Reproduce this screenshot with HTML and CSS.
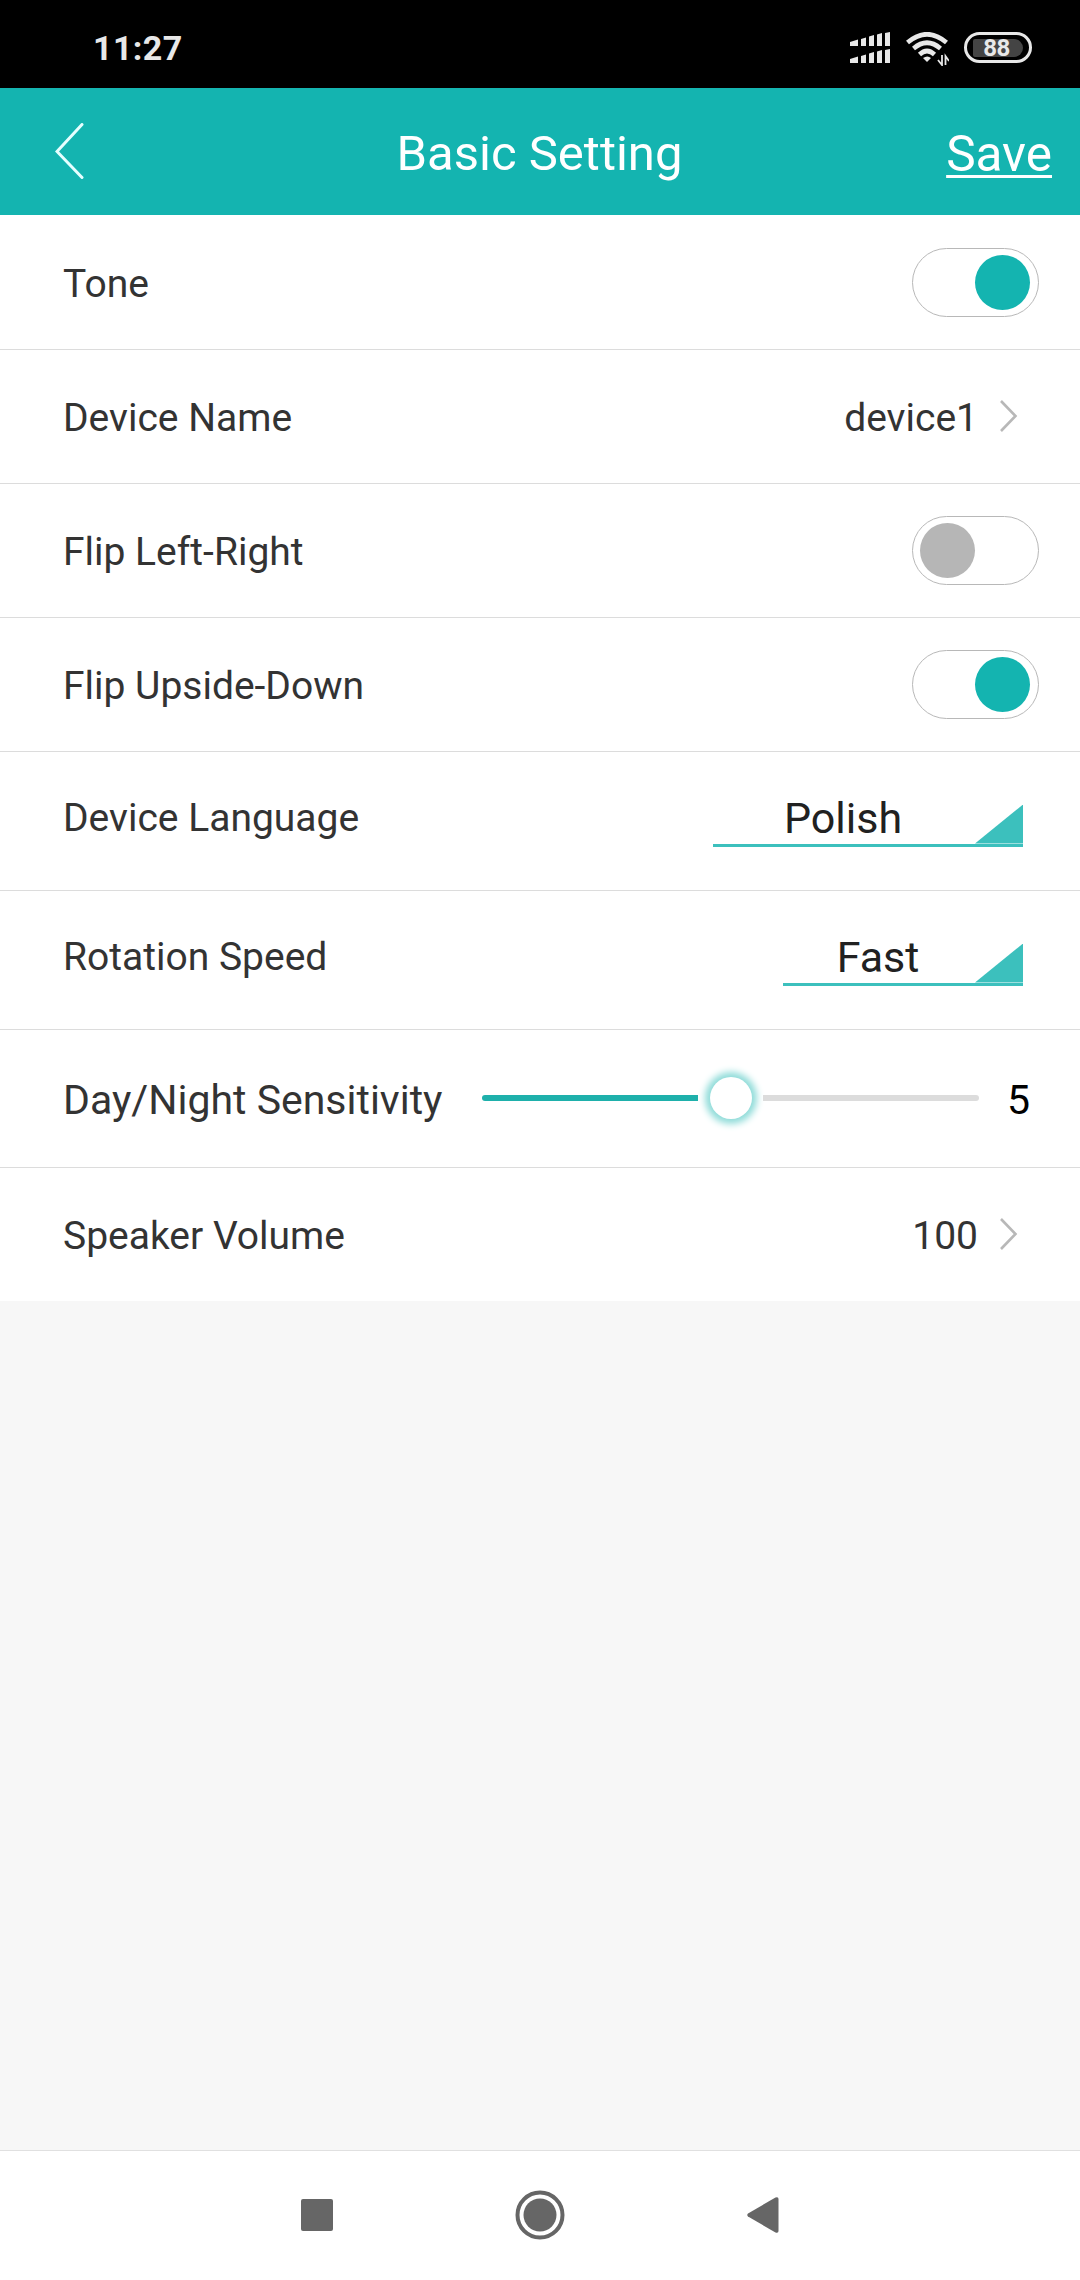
FILE: index.html
```html
<!DOCTYPE html>
<html lang="en">
<head>
    <meta charset="UTF-8">
    <meta name="viewport" content="width=device-width, initial-scale=1.0">
    <title>Basic Setting</title>
    <link rel="stylesheet" href="styles.css">
</head>
<body>
    <div class="status-bar">
        <span class="time">11:27</span>
        <div class="status-icons">
            <svg class="signal" width="40" height="32" viewBox="0 0 40 32" fill="#e8e8e8">
                <path id="bars" d="M0 10l8-2.500v6.500H0zM11 7l5-1.500V14h-5zM19 4.500l5-1.500V14h-5zM27 2.500l5-1.500V14h-5zM35 1l5-1v14h-5z"/>
                <use href="#bars" y="17"/>
            </svg>
            <svg class="wifi" width="43" height="34" viewBox="0 0 43 34" fill="none" stroke="#e8e8e8" stroke-width="4.600">
                <path d="M1.500 10.500Q21 -6 40.500 10.500"/>
                <path d="M7.500 16.500Q21 5 34.500 16.500"/>
                <path d="M13.500 22.500Q21 15.500 28.500 22.500"/>
                <path d="M17 26q4.500-3 8 0l-4 4z" fill="#e8e8e8" stroke="none"/>
                <path d="M36 23v10l-4-5M39.500 33V24l3.500 5" stroke-width="1.800"/>
            </svg>
            <div class="battery"><span>88</span></div>
        </div>
    </div>

    <header>
        <button class="back" aria-label="Back">
            <svg width="30" height="58" viewBox="0 0 30 58" fill="none" stroke="#e6ffff" stroke-width="3" stroke-linecap="round">
                <path d="M27 1.500L2 28.500L27 54.500"/>
            </svg>
        </button>
        <h1>Basic Setting</h1>
        <a class="save" href="#">Save</a>
    </header>

    <main>
        <div class="row row-first">
            <span class="label">Tone</span>
            <span class="switch on"></span>
        </div>
        <div class="row">
            <span class="label">Device Name</span>
            <span class="value value-name">device1</span>
            <svg class="chevron" width="19" height="34" viewBox="0 0 19 34"><path d="M2 1l14.500 15L2 31"/></svg>
        </div>
        <div class="row">
            <span class="label">Flip Left-Right</span>
            <span class="switch"></span>
        </div>
        <div class="row">
            <span class="label">Flip Upside-Down</span>
            <span class="switch on"></span>
        </div>
        <div class="row row-select">
            <span class="label">Device Language</span>
            <div class="select language"><span>Polish</span></div>
        </div>
        <div class="row row-select">
            <span class="label">Rotation Speed</span>
            <div class="select speed"><span>Fast</span></div>
        </div>
        <div class="row row-slider">
            <span class="label">Day/Night Sensitivity</span>
            <div class="slider">
                <span class="track filled"></span>
                <span class="thumb"></span>
                <span class="track"></span>
            </div>
            <span class="level">5</span>
        </div>
        <div class="row row-last">
            <span class="label">Speaker Volume</span>
            <span class="value">100</span>
            <svg class="chevron" width="19" height="34" viewBox="0 0 19 34"><path d="M2 1l14.500 15L2 31"/></svg>
        </div>
    </main>

    <nav>
        <svg width="32" height="32" viewBox="0 0 32 32"><rect width="32" height="32" rx="2"/></svg>
        <svg width="50" height="50" viewBox="0 0 50 50">
            <circle cx="25" cy="25" r="22.500" fill="none" stroke="#666" stroke-width="4"/>
            <circle cx="25" cy="25" r="16.500"/>
        </svg>
        <svg width="32" height="36" viewBox="0 0 32 36"><path d="M1 16.500L28.500 .5Q31.500-.5 31.500 2v32q0 2.500-3 1.500L1 19.500q-1.500-1.500 0-3z"/></svg>
    </nav>
</body>
</html>
```

FILE: styles.css
```css
:root {
    --primary-color: #14b4b0;
    --select-color: #3cc0bd;
    --text-color: #333;
    --border-color: #dcdcdc;
    --background-color: #f7f7f7;
}

* {
    margin: 0;
    padding: 0;
    box-sizing: border-box;
}

body {
    display: flex;
    flex-direction: column;
    height: 2280px;
    font-family: Roboto, "Liberation Sans", sans-serif;
    background-color: var(--background-color);
    color: var(--text-color);
}

svg {
    display: block;
}

.status-bar {
    display: flex;
    justify-content: space-between;
    align-items: center;
    height: 88px;
    padding: 7px 48px 0 93px;
    background-color: #000;
    color: #e8e8e8;
}

.time {
    font-size: 34px;
    font-weight: bold;
    letter-spacing: 0.4px;
}

.status-icons {
    display: flex;
    align-items: center;
}

.wifi {
    margin: 2px 15px 0 16px;
}

.battery {
    display: flex;
    justify-content: center;
    align-items: center;
    width: 68px;
    height: 31px;
    border: 3px solid #e8e8e8;
    border-radius: 16px;
}

.battery span {
    width: 50px;
    height: 18px;
    border-radius: 2px 9px 9px 2px;
    background-color: #444;
    font-size: 24px;
    font-weight: bold;
    line-height: 19px;
    text-align: center;
    padding-right: 3px;
    letter-spacing: -0.6px;
}

header {
    display: grid;
    grid-template-columns: 200px 1fr 200px;
    align-items: center;
    height: 127px;
    padding: 0 28px 0 55px;
    background-color: var(--primary-color);
    color: #fff;
}

.back {
    width: 30px;
    border: none;
    background: none;
}

h1 {
    padding-right: 28px;
    font-size: 49px;
    font-weight: normal;
    text-align: center;
    padding-top: 4px;
}

.save {
    padding-top: 4px;
    font-size: 49.5px;
    color: #fff;
    text-align: right;
    text-decoration: underline;
    text-decoration-thickness: 3px;
    text-underline-offset: 4px;
}

.row {
    display: flex;
    align-items: center;
    height: 134px;
    padding: 0 41px 0 63px;
    border-bottom: 1px solid var(--border-color);
    background-color: #fff;
}

.row-first {
    height: 135px;
}

.label {
    flex: 1;
    padding-top: 2px;
    font-size: 39px;
}

.row-first .label {
    padding-top: 4px;
}

.value {
    margin-right: 21px;
    padding-top: 2px;
    font-size: 39px;
}

.chevron {
    margin-right: 21px;
    fill: none;
    stroke: #b8b8b8;
    stroke-width: 2.6;
}

.switch {
    display: flex;
    align-items: center;
    width: 127px;
    height: 69px;
    padding: 0 7px;
    border: 1.5px solid #b8b8b8;
    border-radius: 35px;
}

.switch::before {
    content: "";
    width: 55px;
    height: 55px;
    border-radius: 50%;
    background-color: #b6b6b6;
}

.switch.on {
    justify-content: flex-end;
    padding-right: 8px;
}

.switch.on::before {
    background-color: var(--primary-color);
}

.row-select {
    height: 139px;
    padding-right: 57px;
}

.row-select .label {
    padding: 0 0 6px;
}

/* underlined dropdown with a corner triangle */
.select {
    display: flex;
    align-items: flex-end;
    height: 54px;
    margin-top: -3px;
    border-bottom: 3px solid var(--select-color);
    font-size: 43px;
    color: #212121;
}

.select span {
    flex: 1;
    padding-right: 2px;
    text-align: center;
    line-height: 52px;
}

.select::after {
    content: "";
    width: 48px;
    height: 39px;
    background-color: var(--select-color);
    clip-path: polygon(100% 0, 100% 100%, 0 100%);
}

.language {
    width: 310px;
}

.speed {
    width: 240px;
}

.row-slider {
    height: 138px;
    padding-right: 50px;
}

.row-slider .label {
    padding-top: 2px;
    font-size: 41px;
}

.slider {
    display: flex;
    justify-content: space-between;
    align-items: center;
    width: 497px;
    margin-top: -2px;
}

.track {
    width: 216px;
    height: 6px;
    border-radius: 0 3px 3px 0;
    background-color: #dcdcdc;
}

.track.filled {
    border-radius: 3px 0 0 3px;
    background-color: #1eb0ab;
}

.thumb {
    width: 42px;
    height: 42px;
    border-radius: 50%;
    background-color: #fff;
    box-shadow: 0 0 7px 5px #8fdcd9;
}

.level {
    width: 51px;
    padding-top: 2px;
    font-size: 41px;
    color: #000;
    text-align: right;
}

.row-last {
    height: 133px;
    border-bottom: none;
}

nav {
    display: flex;
    justify-content: center;
    align-items: center;
    gap: 182px;
    height: 130px;
    margin-top: auto;
    padding-bottom: 1px;
    border-top: 1px solid #e0e0e0;
    background-color: #fff;
    fill: #666;
}
```
